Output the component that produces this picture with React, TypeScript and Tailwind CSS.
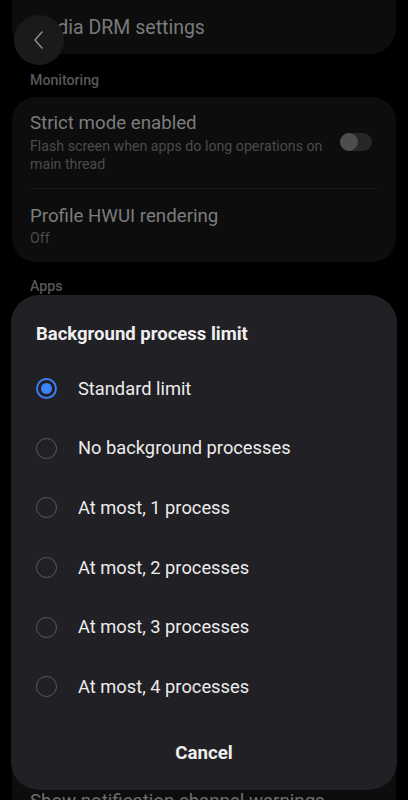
import { useState } from "react";

const options = [
  "Standard limit",
  "No background processes",
  "At most, 1 process",
  "At most, 2 processes",
  "At most, 3 processes",
  "At most, 4 processes",
];

function Radio({ checked }: { checked: boolean }) {
  if (checked) {
    return (
      <div className="w-[21px] h-[21px] rounded-full border-2 border-[#3d7ef0] flex items-center justify-center">
        <div className="w-[11px] h-[11px] rounded-full bg-[#3d82f7]" />
      </div>
    );
  }
  return <div className="w-[21px] h-[21px] rounded-full border-[1.5px] border-[#5b5a60]" />;
}

export default function App() {
  const [selected, setSelected] = useState(0);

  return (
    <div
      className="relative w-[408px] h-[800px] overflow-hidden bg-black"
      style={{ fontFamily: "Roboto, 'Noto Sans', sans-serif" }}
    >
      {/* Dimmed settings page behind the dialog */}
      <div className="flex flex-col px-3">
        <div className="-mt-4 h-[70px] rounded-b-[26px] bg-[#0d0d0d] flex items-end pb-[13px] px-[18px]">
          <span className="text-[19.5px] leading-[26px] text-[#7a7a7a]">Media DRM settings</span>
        </div>

        <div className="px-[18px] pt-[17px] pb-[8px] text-[14.2px] leading-[18px] font-medium text-[#585858]">
          Monitoring
        </div>

        <div className="rounded-[24px] bg-[#0d0d0d] px-[18px] flex flex-col">
          <div className="flex items-center gap-3 pt-[14px] pb-[15px]">
            <div className="flex-1 flex flex-col">
              <span className="text-[18.7px] leading-[24px] text-[#7c7c7c]">Strict mode enabled</span>
              <span className="mt-[2px] text-[14.2px] leading-[18px] text-[#4b4b4b]">
                Flash screen when apps do long operations on main thread
              </span>
            </div>
            <div className="w-[32px] h-[18px] rounded-full bg-[#262626] flex items-center mr-[6px]">
              <div className="w-[18px] h-[18px] rounded-full bg-[#4d4d4d]" />
            </div>
          </div>
          <div className="h-px bg-[#1c1c1c]" />
          <div className="flex flex-col pt-[15px] pb-[14px]">
            <span className="text-[18.7px] leading-[24px] text-[#7c7c7c]">Profile HWUI rendering</span>
            <span className="text-[14.2px] leading-[20px] text-[#4b4b4b]">Off</span>
          </div>
        </div>

        <div className="px-[18px] pt-[15px] pb-[6px] text-[14.2px] leading-[18px] font-medium text-[#585858]">
          Apps
        </div>

        <div className="rounded-[24px] bg-[#0d0d0d] px-[18px] h-[520px] flex flex-col justify-end pb-[8px]">
          <span className="text-[18.7px] leading-[24px] text-[#6e6e6e]">Show notification channel warnings</span>
        </div>
      </div>

      {/* Back button */}
      <div className="absolute left-[14px] top-[15px] w-[50px] h-[50px] rounded-full bg-[#1a1a1a] flex items-center justify-center">
        <svg width="14" height="22" viewBox="0 0 14 22" fill="none">
          <path d="M10 3 L3 11 L10 19" stroke="#8a8a8a" strokeWidth="1.6" strokeLinecap="round" strokeLinejoin="round" />
        </svg>
      </div>

      {/* Dialog */}
      <div className="absolute left-[11px] right-[11px] top-[295px] h-[495px] rounded-[28px] bg-[#212025] flex flex-col">
        <div className="px-[25px] pt-[27px] text-[18.5px] leading-[24px] font-bold text-[#efefef]">
          Background process limit
        </div>
        <div className="mt-[13px] flex flex-col">
          {options.map((o, i) => (
            <button
              key={o}
              onClick={() => setSelected(i)}
              className="h-[59.6px] flex items-center pl-[25px] gap-[21px] text-left"
            >
              <Radio checked={selected === i} />
              <span className="text-[18.3px] leading-[24px] text-[#ececec]">{o}</span>
            </button>
          ))}
        </div>
        <button className="mt-[12px] h-[48px] flex items-center justify-center text-[18.7px] font-bold text-[#efefef]">
          Cancel
        </button>
      </div>
    </div>
  );
}
